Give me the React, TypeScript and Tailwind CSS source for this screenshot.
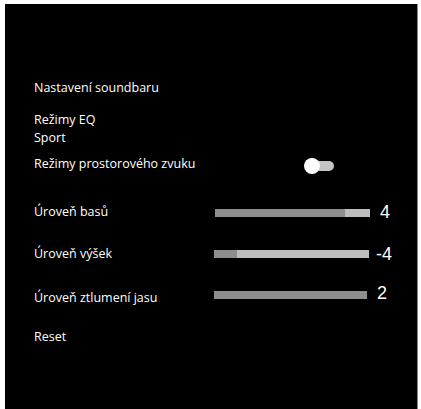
import React from "react";

const font = { fontFamily: '"Open Sans", "Noto Sans", sans-serif' };

function SliderRow({
  label,
  value,
  fill,
  barStart,
  barWidth,
  className,
  barClass,
  numClass,
}: {
  label: string;
  value: string;
  fill: number;
  barStart: number;
  barWidth: number;
  className: string;
  barClass: string;
  numClass: string;
}) {
  return (
    <div className={"flex h-[18px] items-center " + className}>
      <div className="w-[180px] shrink-0 text-[12.5px] leading-[18px] text-white" style={font}>
        {label}
      </div>
      <div className={"flex h-[8px] bg-[#bdbdbd] " + barClass} style={{ marginLeft: barStart, width: barWidth }}>
        <div className="h-full bg-[#8e8e8e]" style={{ width: `${fill}%` }} />
      </div>
      <div
        className={"ml-[5px] w-[20px] text-center text-[18px] leading-[18px] text-white " + numClass}
        style={{ fontFamily: '"Liberation Sans", Arial, sans-serif' }}
      >
        {value}
      </div>
    </div>
  );
}

export default function App() {
  return (
    <div className="h-[409px] w-[421px] overflow-hidden bg-white pl-[5px] pr-[3px] pt-[4px]">
      <div className="h-[405px] w-[413px] border-r border-[#8a8a8a] bg-black pl-[29px] pt-[75px]" style={font}>
        <div className="text-[12.5px] leading-[18px] text-white">Nastavení soundbaru</div>
        <div className="mt-[14px] text-[12.5px] leading-[18px] text-white">Režimy EQ</div>
        <div className="text-[12.5px] leading-[18px] text-white">Sport</div>
        <div className="mt-[8px] flex h-[18px] items-start">
          <div className="w-[270px] shrink-0 text-[12.5px] leading-[18px] text-white">
            Režimy prostorového zvuku
          </div>
          <div className="relative mt-[3px] h-[16px] w-[30px]">
            <div className="absolute left-[10px] top-[3px] h-[10px] w-[20px] rounded-full bg-[#c4c4c4]" />
            <div className="absolute left-0 top-0 h-[16px] w-[16px] rounded-full bg-white" />
          </div>
        </div>
        <SliderRow
          label="Úroveň basů"
          value="4"
          fill={84}
          barStart={1}
          barWidth={155}
          className="mt-[30px]"
          barClass="mt-[1px]"
          numClass=""
        />
        <SliderRow
          label="Úroveň výšek"
          value="-4"
          fill={15}
          barStart={0}
          barWidth={155}
          className="mt-[24px]"
          barClass=""
          numClass=""
        />
        <SliderRow
          label="Úroveň ztlumení jasu"
          value="2"
          fill={100}
          barStart={0}
          barWidth={153}
          className="mt-[26px]"
          barClass="-mt-[6px]"
          numClass="-mt-[10px]"
        />
        <div className="mt-[21px] text-[12.5px] leading-[18px] text-white">Reset</div>
      </div>
    </div>
  );
}
